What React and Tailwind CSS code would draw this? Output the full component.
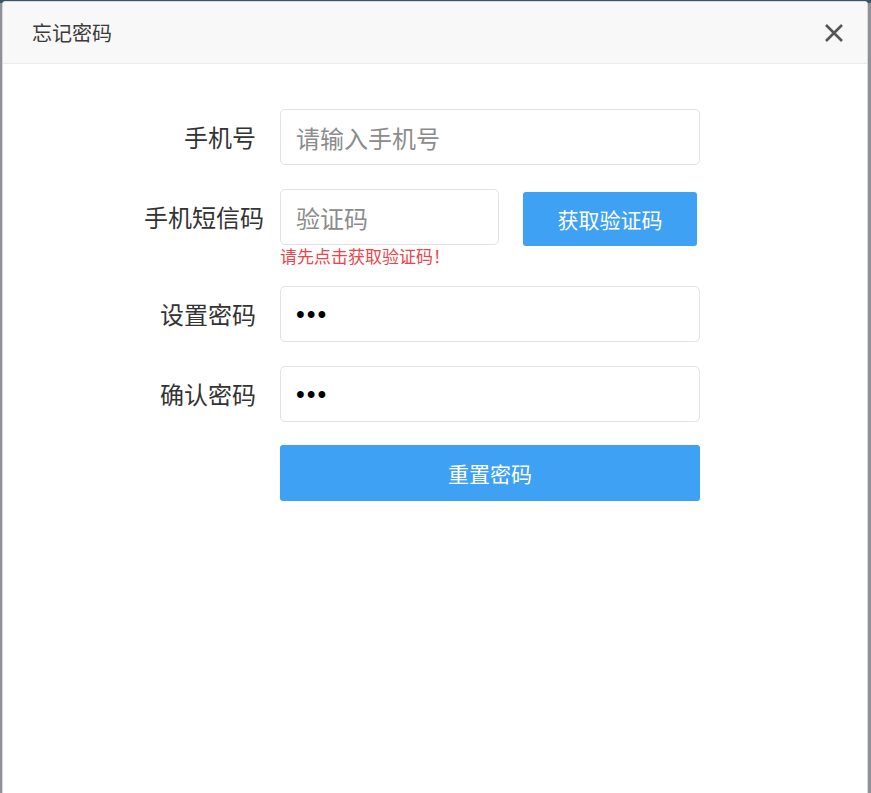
import React, { useState } from "react";

const font = { fontFamily: '"Microsoft YaHei", "Noto Sans CJK SC", "Noto Sans", sans-serif' };

const Row = ({ label, children }) => (
  <div className="flex items-start">
    <div className="w-[112px] h-[56px] flex items-center justify-end shrink-0">
      <span className="text-[24px] text-[#333] whitespace-nowrap text-right w-full leading-none">{label}</span>
    </div>
    <div className="ml-[24px]">{children}</div>
  </div>
);

const App = () => {
  const [phone, setPhone] = useState("");
  const [code, setCode] = useState("");

  return (
    <div className="w-[871px] h-[793px] bg-[#8e9297] overflow-hidden" style={font}>
      <div className="h-[3px] bg-[#3b5366]" />
      <div className="ml-[2px] mr-[3px] -mt-[2px] h-[800px] bg-white rounded-[3px] border border-[#d9d9d9] overflow-hidden">
        {/* header */}
        <div className="h-[62px] bg-[#f8f8f8] border-b border-[#ececec] flex items-center justify-between pl-[29px] pr-[21px]">
          <span className="text-[20px] text-[#3a3a3a]">忘记密码</span>
          <button className="w-[24px] h-[24px] flex items-center justify-center">
            <svg width="22" height="22" viewBox="0 0 22 22">
              <path d="M3 3 L19 19 M19 3 L3 19" stroke="#555" strokeWidth="2.6" />
            </svg>
          </button>
        </div>

        {/* form */}
        <div className="pl-[141px] pt-[45px] flex flex-col">
          <Row label="手机号">
            <input
              value={phone}
              onChange={(e) => setPhone(e.target.value)}
              placeholder="请输入手机号"
              className="w-[420px] h-[56px] border border-[#e3e3e3] rounded-[5px] px-[15px] text-[24px] text-[#333] placeholder:text-[#8c8c8c] outline-none"
            />
          </Row>

          <div className="mt-[24px]">
            <Row label="手机短信码">
              <div className="flex items-start">
                <input
                  value={code}
                  onChange={(e) => setCode(e.target.value)}
                  placeholder="验证码"
                  className="w-[219px] h-[56px] border border-[#e3e3e3] rounded-[5px] px-[15px] text-[24px] text-[#333] placeholder:text-[#8c8c8c] outline-none"
                />
                <button className="ml-[24px] mt-[3px] w-[174px] h-[54px] bg-[#3ea1f3] rounded-[3px] text-white text-[21px] leading-none">
                  获取验证码
                </button>
              </div>
              <p className="text-[17px] text-[#ee4449] leading-none mt-[1px] h-[39px]">请先点击获取验证码！</p>
            </Row>
          </div>

          <Row label="设置密码">
            <input
              type="password"
              defaultValue="123"
              className="w-[420px] h-[56px] border border-[#e3e3e3] rounded-[5px] px-[15px] text-[25px] tracking-[2px] text-black outline-none font-['Liberation_Sans',sans-serif]"
            />
          </Row>

          <div className="mt-[24px]">
            <Row label="确认密码">
              <input
                type="password"
                defaultValue="123"
                className="w-[420px] h-[56px] border border-[#e3e3e3] rounded-[5px] px-[15px] text-[25px] tracking-[2px] text-black outline-none font-['Liberation_Sans',sans-serif]"
              />
            </Row>
          </div>

          <div className="mt-[23px] ml-[136px]">
            <button className="w-[420px] h-[56px] bg-[#3ea1f3] rounded-[3px] text-white text-[21px] leading-none">
              重置密码
            </button>
          </div>
        </div>
      </div>
    </div>
  );
};

export default App;
